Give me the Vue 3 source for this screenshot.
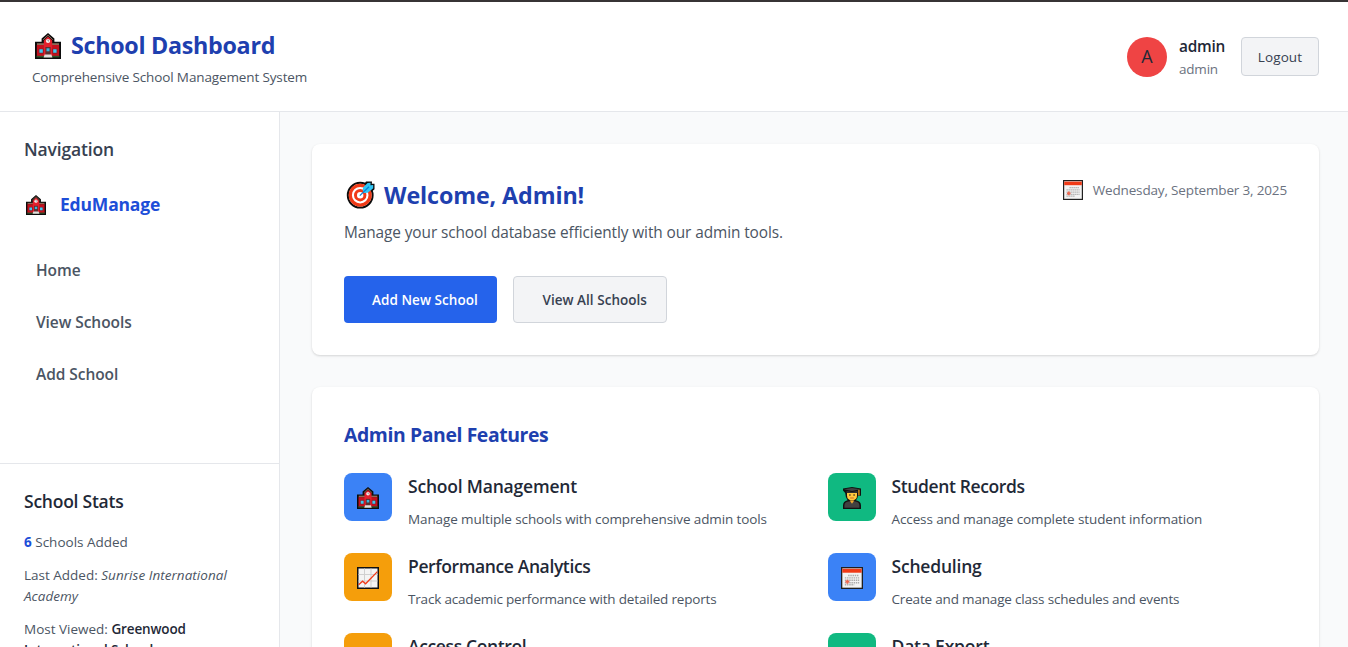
<script setup>
import { h } from 'vue'

const el = (tag, attrs) => h(tag, attrs)
const glyphs = {
  school: () => [
    el('path', { d: 'M13 0 19.400 5.400V8.800H26V26H0V8.800h6.600V5.400Z', fill: '#0c0c0c' }),
    el('path', { d: 'M2 10.2h22v2H2z', fill: '#8d6b58' }),
    el('path', { d: 'M1.800 12h22.400v11.4H1.800z', fill: '#c4101d' }),
    el('path', { d: 'M13 3.4 17.2 7.4V23.4H8.8V7.4Z', fill: '#e3202c' }),
    el('path', { d: 'M8.200 6.8 13 2.200l4.800 4.600', fill: 'none', stroke: '#8d6b58', 'stroke-width': 1 }),
    el('circle', { cx: 13, cy: 8, r: 2.1, fill: '#f5f0f0' }),
    el('path', { d: 'M13 6.6V8h1', fill: 'none', stroke: '#555', 'stroke-width': 0.6 }),
    el('path', { d: 'M3.8 15.8h4.6v4.6H3.8zM17.6 15.8h4.6v4.6h-4.6z', fill: '#7b1f27' }),
    el('path', { d: 'M4.400 16.3h3.400v3.400H4.400zM18.2 16.3h3.400v3.400h-3.400z', fill: '#43c6ef' }),
    el('path', { d: 'M10.4 14h5.2v8.5h-5.2z', fill: '#5d3030' }),
    el('path', { d: 'M11.5 15.3h3v3h-3z', fill: '#39b5e0' }),
    el('path', { d: 'M1.600 22.800h22.800v1.6H1.600z', fill: '#31552c' }),
    el('path', { d: 'M9.6 21.6h6.8l1 2.800H8.6z', fill: '#e2dddd' })
  ],
  target: () => [
    el('circle', { cx: 13.2, cy: 14.2, r: 12.4, fill: '#fff', stroke: '#0c0c0c', 'stroke-width': 2 }),
    el('path', { d: 'm14.600 7 4.400-6.600h6l-.2 2.400 2.700-.1v5.500l-4.700 4.400Z', fill: '#0c0c0c' }),
    el('circle', { cx: 13.2, cy: 14.2, r: 9.900, fill: '#fff', stroke: '#f03a17', 'stroke-width': 3.2 }),
    el('circle', { cx: 13.2, cy: 14.2, r: 4.7, fill: '#fff', stroke: '#f03a17', 'stroke-width': 3 }),
    el('path', { d: 'm15.800 9.7.2-3.200L20.600 2l3-.3-.2 2.6 2.800-.2v3.200l-5.400 4.500-3.800.2Z', fill: '#31c5f4' }),
    el('path', { d: 'M12.8 14.6 22 5.8', fill: 'none', stroke: '#0883d8', 'stroke-width': 1.3 })
  ],
  calendar: () => [
    el('path', { d: 'M0 0h20v20H0z', fill: '#202020' }),
    el('path', { d: 'M1.200 1.200h17.600v17.600H1.200z', fill: '#f3f3f3' }),
    el('path', { d: 'M1.200 1.600h17.600V5.200H1.200z', fill: '#f03a17' }),
    el('path', { d: 'M6.5 7.7h10M3.5 9.9h13M3.5 12.1h13M3.5 14.3h13M3.5 16.2h8.5', fill: 'none', stroke: '#aaa', 'stroke-width': 1.3, 'stroke-dasharray': '1.3 .7' }),
    el('path', { d: 'M4 13.4h3.6M5.8 11.6v3.600', fill: 'none', stroke: '#ef6850', 'stroke-width': 1.6 })
  ],
  chart: () => [
    el('path', { d: 'M0 0h22v22H0z', fill: '#111' }),
    el('path', { d: 'M1.500 1.500h19v19h-19z', fill: '#f4f4f4' }),
    el('path', { d: 'M7.5 1.5v19M14 1.5v19M1.5 7.5h19M1.5 14h19', fill: 'none', stroke: '#d0d0d0', 'stroke-width': 1 }),
    el('path', { d: 'm1.6 17.8 4-3.6 3 2.6L20.4 4.6', fill: 'none', stroke: '#f03a17', 'stroke-width': 1.3 })
  ],
  student: () => [
    el('path', { d: 'M1 22v-3.6q0-4.2 4.6-5.2Q3.4 10.5 3.2 6L1 3.4V1.6L10 0l9 1.6v7.2h-3Q15.7 11.5 14 13.2q5 1 5 5.2V22Z', fill: '#111' }),
    el('path', { d: 'M2.4 20.7v-2.2q0-3.6 5-4.2h5q5 .6 5 4.2v2.2Z', fill: '#414141' }),
    el('path', { d: 'M5 6h10v2.6q0 4.8-5 4.8T5 8.6Z', fill: '#ffc83d' }),
    el('path', { d: 'M7.7 13.5h4.6L10 16.7Z', fill: '#f0a92f' }),
    el('path', { d: 'M2 2.3 10 1l8 1.3L10 4Z', fill: '#424242' }),
    el('path', { d: 'M4.5 3.7 10 4.9l5.5-1.2V6h-11Z', fill: '#303030' }),
    el('path', { d: 'M16.9 2.7V8.6', fill: 'none', stroke: '#c08018', 'stroke-width': 1.6 }),
    el('path', { d: 'M7.2 8h1.4M11.4 8h1.4', fill: 'none', stroke: '#4a3925', 'stroke-width': 1.4 }),
    el('path', { d: 'M8.2 11h3.6', fill: 'none', stroke: '#c85b26', 'stroke-width': 0.9 })
  ],
  lock: () => [
    el('path', { d: 'M6 11V5.500a4 4 0 0 1 8 0V11', fill: 'none', stroke: '#7b5519', 'stroke-width': 2.4 }),
    el('path', { d: 'M2 10h16v11H2z', fill: '#ffc83d', stroke: '#111', 'stroke-width': 1.4 })
  ],
  save: () => [
    el('path', { d: 'M1 2h17l3 3v16H1z', fill: '#414141', stroke: '#111', 'stroke-width': 1.4 }),
    el('path', { d: 'M5 3h11v6H5z', fill: '#d0d0d0' })
  ]
}
const boxes = { school: '0 0 26 26', target: '0 0 27.5 27.5', calendar: '0 0 20 20', chart: '0 0 22 22', student: '0 0 20 22', lock: '0 0 20 22', save: '0 0 22 22' }
const Glyph = (props) => h('svg', { viewBox: boxes[props.name], 'aria-hidden': 'true' }, glyphs[props.name]())
Glyph.props = ['name']

const links = ['Home', 'View Schools', 'Add School']
const features = [
  { icon: 'school', tone: 'blue', title: 'School Management', text: 'Manage multiple schools with comprehensive admin tools' },
  { icon: 'student', tone: 'green', title: 'Student Records', text: 'Access and manage complete student information', tight: true },
  { icon: 'chart', tone: 'amber', title: 'Performance Analytics', text: 'Track academic performance with detailed reports', tight: true, snug: true },
  { icon: 'calendar', tone: 'blue', title: 'Scheduling', text: 'Create and manage class schedules and events', snug: true },
  { icon: 'lock', tone: 'amber', title: 'Access Control', text: 'Manage user permissions and roles', tight: true },
  { icon: 'save', tone: 'green', title: 'Data Export', text: 'Export school data in multiple formats' }
]
</script>

<template>
  <div class="page">
    <header class="header">
      <div>
        <h1 class="brand"><Glyph name="school" class="brand-icon" /><span>School Dashboard</span></h1>
        <p class="tagline">Comprehensive School Management System</p>
      </div>
      <div class="account">
        <div class="avatar">A</div>
        <div class="user">
          <div class="user-name">admin</div>
          <div class="user-role">admin</div>
        </div>
        <button class="logout">Logout</button>
      </div>
    </header>
    <div class="body">
      <aside class="sidebar">
        <div class="nav">
          <h2 class="side-title nav-title">Navigation</h2>
          <div class="logo"><Glyph name="school" class="logo-icon" /><span>EduManage</span></div>
          <nav class="links">
            <a v-for="link in links" :key="link" class="link">{{ link }}</a>
          </nav>
        </div>
        <div class="stats">
          <h2 class="side-title">School Stats</h2>
          <p><b class="count">6</b> Schools Added</p>
          <p>Last Added: <em>Sunrise International Academy</em></p>
          <p>Most Viewed: <strong>Greenwood International School</strong></p>
        </div>
      </aside>
      <main class="main">
        <section class="card welcome">
          <div>
            <h2 class="welcome-title"><Glyph name="target" class="target-icon" /><span>Welcome, Admin!</span></h2>
            <p class="lead">Manage your school database efficiently with our admin tools.</p>
            <div class="actions">
              <button class="btn primary">Add New School</button>
              <button class="btn secondary">View All Schools</button>
            </div>
          </div>
          <div class="date"><Glyph name="calendar" class="date-icon" /><span>Wednesday, September 3, 2025</span></div>
        </section>
        <section class="card">
          <h2 class="features-title">Admin Panel Features</h2>
          <div class="features">
            <div v-for="f in features" :key="f.title" class="feature">
              <div class="tile" :class="f.tone"><Glyph :name="f.icon" class="tile-icon" /></div>
              <div>
                <h3 :class="{ tight: f.tight }">{{ f.title }}</h3>
                <p :class="{ snug: f.snug }">{{ f.text }}</p>
              </div>
            </div>
          </div>
        </section>
      </main>
    </div>
  </div>
</template>

<style>
body { margin: 0; overflow: hidden; }
</style>

<style scoped>
.page { box-sizing: border-box; height: 647px; overflow: hidden; display: flex; flex-direction: column; border-top: 2px solid #373435; background: #f9fafb; color: #1f2937; font-family: "Open Sans", "Noto Sans", sans-serif; font-size: 13.5px; letter-spacing: -.12px; }
h1, h2, h3, p { margin: 0; }
svg { display: block; flex: none; overflow: visible; }
button { box-sizing: border-box; font-family: inherit; margin: 0; }
.header { box-sizing: border-box; flex: none; height: 110px; display: flex; justify-content: space-between; align-items: center; padding: 0 29px 0 32px; border-bottom: 1px solid #e5e7eb; background: #fff; }
.brand { display: flex; align-items: center; gap: 10px; height: 38px; padding-left: 3px; font-size: 23.3px; font-weight: 700; letter-spacing: -.3px; color: #1e40af; }
.brand-icon { width: 26px; height: 26px; margin-top: 2px; }
.tagline { line-height: 22px; margin-top: 2px; color: #4b5563; letter-spacing: -.13px; }
.account { display: flex; align-items: center; }
.avatar { width: 40px; height: 40px; border-radius: 50%; background: #ef4444; font-size: 18px; line-height: 38px; text-align: center; }
.user { width: 46px; margin: 0 16px 0 12px; }
.user-name { padding-top: 1px; font-size: 15.4px; font-weight: 600; line-height: 24px; letter-spacing: -.26px; }
.user-role { margin-top: -1px; line-height: 22px; color: #6b7280; letter-spacing: -.2px; }
.logout { width: 78px; height: 39px; padding: 0; border: 1px solid #d1d5db; border-radius: 4px; background: #f3f4f6; color: #374151; font-size: 13.5px; letter-spacing: .1px; }
.body { flex: 1; min-height: 0; display: flex; }
.sidebar { box-sizing: border-box; flex: none; width: 280px; border-right: 1px solid #e5e7eb; background: #fff; }
.nav { box-sizing: border-box; height: 351px; padding: 24px; }
.side-title { font-size: 17.5px; font-weight: 550; line-height: 27px; letter-spacing: -.24px; }
.nav-title { color: #374151; letter-spacing: -.15px; }
.logo { display: flex; align-items: center; gap: 14px; height: 30px; margin-top: 26px; padding-left: 2px; font-size: 17.5px; font-weight: 700; letter-spacing: -.18px; color: #1d4ed8; }
.logo-icon { width: 20px; height: 20px; margin-top: 2px; }
.links { display: flex; flex-direction: column; gap: 8px; margin-top: 29px; }
.link { padding: 10px 12px; line-height: 24px; font-size: 15.5px; font-weight: 550; color: #4b5563; letter-spacing: -.06px; }
.stats { padding: 24px; border-top: 1px solid #e5e7eb; color: #4b5563; }
.stats .side-title { margin-bottom: 17px; color: #1f2937; }
.stats p { line-height: 21px; margin-bottom: 12px; letter-spacing: 0; }
.count { color: #1d4ed8; }
.stats em { letter-spacing: .04px; }
.stats strong { color: #1f2937; font-weight: 600; letter-spacing: -.14px; }
.main { flex: 1; padding: 32px 29px 0 32px; display: flex; flex-direction: column; gap: 32px; }
.card { box-sizing: border-box; flex: none; padding: 32px; border-radius: 8px; background: #fff; box-shadow: 0 1px 3px rgba(0, 0, 0, .1), 0 1px 2px rgba(0, 0, 0, .06); }
.welcome { height: 211px; display: flex; justify-content: space-between; align-items: flex-start; }
.welcome-title { display: flex; align-items: center; gap: 9.500px; height: 38px; padding-left: 3px; font-size: 23.3px; font-weight: 700; letter-spacing: -.12px; color: #1e40af; }
.target-icon { width: 27.5px; height: 27.5px; }
.lead { margin-top: 6px; line-height: 25px; font-size: 15.4px; letter-spacing: -.09px; color: #4b5563; }
.actions { display: flex; gap: 16px; margin-top: 31px; }
.btn { height: 47px; padding: 0 0 0 28px; border: 0; border-radius: 4px; font-size: 13.5px; font-weight: 600; text-align: left; }
.primary { width: 153px; background: #2563eb; color: #fff; letter-spacing: .06px; }
.secondary { width: 154px; padding-left: 28.500px; border: 1px solid #d1d5db; background: #f3f4f6; color: #374151; letter-spacing: .03px; }
.date { display: flex; align-items: center; gap: 10px; height: 28px; color: #6b7280; letter-spacing: -.16px; }
.date-icon { width: 20px; height: 20px; }
.features-title { padding-top: 1px; line-height: 30px; font-size: 19.4px; font-weight: 700; letter-spacing: -.4px; color: #1e40af; }
.features { display: grid; grid-template-columns: 1fr 1fr; gap: 24px; margin-top: 23px; }
.feature { display: flex; gap: 16px; height: 56px; }
.tile { flex: none; width: 48px; height: 48px; border-radius: 8px; display: flex; align-items: center; justify-content: center; }
.tile-icon { height: 22px; margin-top: 2px; }
.blue { background: #3b82f6; }
.green { background: #10b981; }
.amber { background: #f59e0b; }
h3 { font-size: 17.5px; font-weight: 550; line-height: 27px; letter-spacing: -.2px; color: #1f2937; white-space: nowrap; }
h3.tight { letter-spacing: -.38px; }
.feature p { margin-top: 9px; line-height: 21px; letter-spacing: -.11px; color: #4b5563; white-space: nowrap; }
.feature p.snug { letter-spacing: -.18px; }
</style>
